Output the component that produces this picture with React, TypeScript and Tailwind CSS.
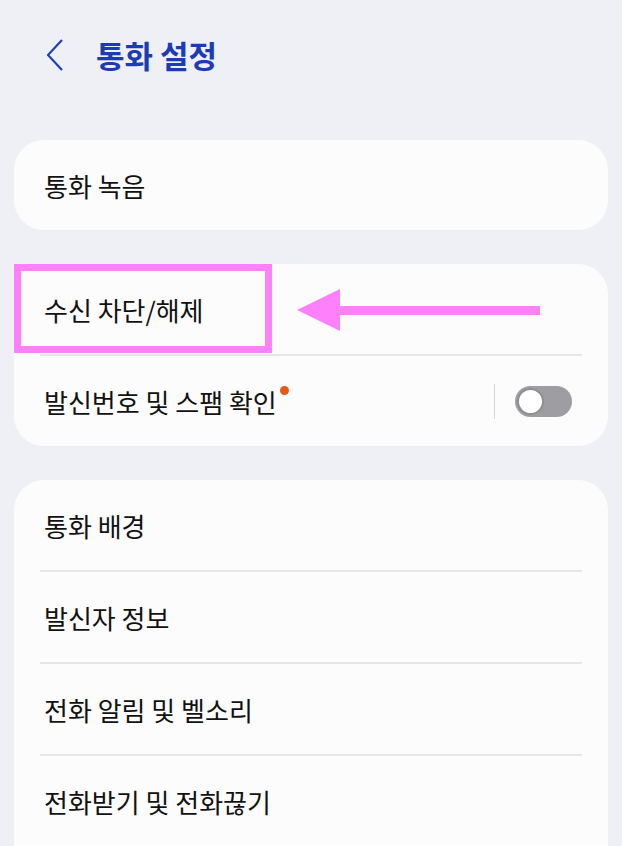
const Divider = () => <div className="mx-[26px] h-[2px] bg-[#e6e6e9]" />;

const Row = ({ label }: { label: string }) => (
  <div className="flex h-[90px] items-center px-[30px] text-[26px] text-[#111111]">{label}</div>
);

const Toggle = () => (
  <div className="flex h-[31px] w-[57px] items-center rounded-full bg-[#9d9da2] p-[2px]">
    <div className="h-[27px] w-[27px] rounded-full border-[2px] border-[#8e8e93] bg-white" />
  </div>
);

const groupTop = ["통화 배경", "발신자 정보", "전화 알림 및 벨소리", "전화받기 및 전화끊기"];

export default function App() {
  return (
    <div
      className="min-h-[846px] w-[622px] overflow-hidden bg-[#eff0f5] px-[14px]"
      style={{ fontFamily: '"Noto Sans CJK KR", "Noto Sans", sans-serif' }}
    >
      <div className="flex h-[110px] items-center pl-[33px]">
        <svg width="18" height="32" viewBox="0 0 18 32" className="mr-[31px]">
          <polyline points="15,1 1,16 15,31" fill="none" stroke="#1f3fb4" strokeWidth="2.2" strokeLinejoin="miter" />
        </svg>
        <h1 className="text-[31px] font-bold text-[#1c3cb6]">통화 설정</h1>
      </div>

      <div className="mt-[30px] flex flex-col gap-[34px]">
        <div className="rounded-[30px] bg-[#fcfcfc]">
          <Row label="통화 녹음" />
        </div>

        <div className="relative rounded-[30px] bg-[#fcfcfc]">
          <Row label="수신 차단/해제" />
          <Divider />
          <div className="flex h-[90px] items-center px-[30px]">
            <span className="text-[26px] text-[#111111]">발신번호 및 스팸 확인</span>
            <span className="mb-[22px] ml-[3px] h-[9px] w-[9px] rounded-full bg-[#e25a17]" />
            <div className="ml-auto mr-[20px] h-[35px] w-[1px] bg-[#d5d5d8]" />
            <div className="mr-[6px]">
              <Toggle />
            </div>
          </div>

          <div className="absolute left-0 top-0 h-[89px] w-[258px] border-[7px] border-[#ff80fb]" />
          <div className="absolute left-[283px] top-[25px] flex items-center">
            <div className="h-0 w-0 border-y-[21px] border-r-[43px] border-y-transparent border-r-[#ff80fb]" />
            <div className="h-[9px] w-[200px] bg-[#ff80fb]" />
          </div>
        </div>

        <div className="rounded-t-[30px] bg-[#fcfcfc] pb-[40px]">
          {groupTop.map((label, i) => (
            <div key={label}>
              {i > 0 && <Divider />}
              <Row label={label} />
            </div>
          ))}
        </div>
      </div>
    </div>
  );
}
